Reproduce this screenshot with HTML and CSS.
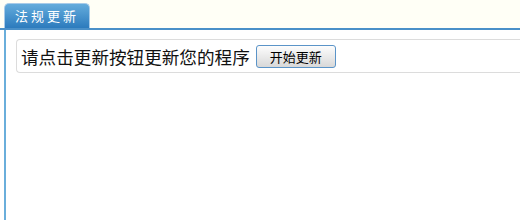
FILE: index.html
```html
<!DOCTYPE html>
<html lang="zh">
  <head>
    <meta charset="UTF-8" />
    <meta name="viewport" content="width=device-width, initial-scale=1.0" />
    <title>法规更新</title>
    <link rel="stylesheet" href="styles.css">
  </head>
  <body>
    <div class="tabs">
      <span class="tab">法规更新</span>
    </div>
    <div class="panel">
      <div class="box">
        <span class="tip">请点击更新按钮更新您的程序</span>
        <button class="btn" type="button">开始更新</button>
      </div>
    </div>
  </body>
</html>
```

FILE: styles.css
```css
body {
  margin: 0;
  background: #fff;
  font-family: "Noto Sans CJK SC", "DejaVu Sans", sans-serif;
}
.tabs {
  padding: 3px 0 0 4px;
  background: #fffff6;
  border-bottom: 2px solid #4a90c8;
  display: flex;
  align-items: flex-end;
}
.tab {
  display: block;
  width: 86px;
  height: 25px;
  box-sizing: border-box;
  padding-left: 10px;
  line-height: 23px;
  font-size: 13px;
  letter-spacing: 3px;
  color: #fff;
  background: linear-gradient(#64acdc, #2c7bbd);
  border: 1px solid #a8cbe8;
  border-bottom: none;
  border-radius: 5px 5px 0 0;
}
.panel {
  margin-left: 4px;
  border-left: 2px solid #6aaedb;
  height: 190px;
  padding: 9px 0 0 10px;
  box-sizing: border-box;
}
.box {
  display: flex;
  align-items: center;
  height: 34px;
  box-sizing: border-box;
  padding-left: 4px;
  border: 1px solid #dcdcdc;
  border-right: none;
  border-radius: 4px 0 0 4px;
}
.tip {
  font-size: 17.6px;
  color: #111;
}
.btn {
  margin-left: 6px;
  width: 80px;
  height: 23px;
  padding: 0;
  font-family: inherit;
  font-size: 13px;
  color: #000;
  background: linear-gradient(#fdfdfd, #d8d8d8);
  border: 1px solid #5b94c8;
  border-radius: 3px;
}
```
